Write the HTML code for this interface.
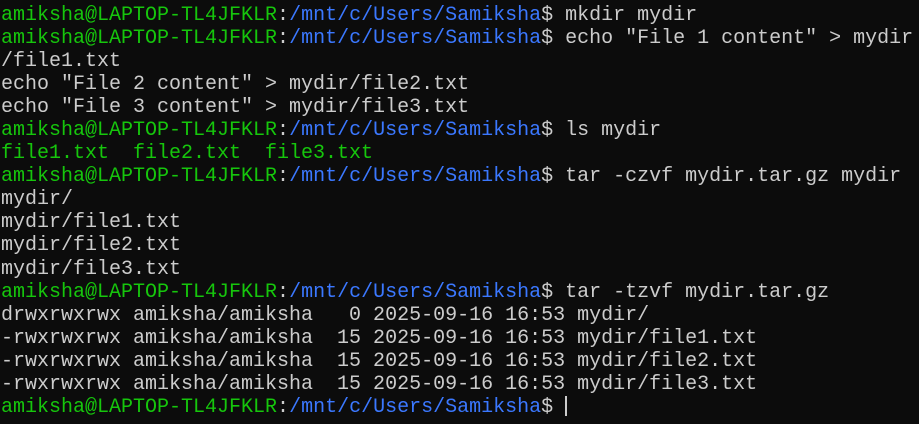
<html><head><style>
body{margin:0;background:#0c0c0c;width:919px;height:424px;overflow:hidden}
pre{margin:0;padding:4px 0 0 1px;font-family:"Liberation Mono",monospace;font-size:20px;line-height:23.05px;color:#cccccc}
.g{color:#16c60c}.b{color:#3b78ff}
.c{display:inline-block;width:2px;height:20px;background:#cccccc;vertical-align:-4px}
</style></head><body><pre><span class="g">amiksha@LAPTOP-TL4JFKLR</span>:<span class="b">/mnt/c/Users/Samiksha</span>$ mkdir mydir
<span class="g">amiksha@LAPTOP-TL4JFKLR</span>:<span class="b">/mnt/c/Users/Samiksha</span>$ echo "File 1 content" &gt; mydir
/file1.txt
echo "File 2 content" &gt; mydir/file2.txt
echo "File 3 content" &gt; mydir/file3.txt
<span class="g">amiksha@LAPTOP-TL4JFKLR</span>:<span class="b">/mnt/c/Users/Samiksha</span>$ ls mydir
<span class="g">file1.txt  file2.txt  file3.txt</span>
<span class="g">amiksha@LAPTOP-TL4JFKLR</span>:<span class="b">/mnt/c/Users/Samiksha</span>$ tar -czvf mydir.tar.gz mydir
mydir/
mydir/file1.txt
mydir/file2.txt
mydir/file3.txt
<span class="g">amiksha@LAPTOP-TL4JFKLR</span>:<span class="b">/mnt/c/Users/Samiksha</span>$ tar -tzvf mydir.tar.gz
drwxrwxrwx amiksha/amiksha   0 2025-09-16 16:53 mydir/
-rwxrwxrwx amiksha/amiksha  15 2025-09-16 16:53 mydir/file1.txt
-rwxrwxrwx amiksha/amiksha  15 2025-09-16 16:53 mydir/file2.txt
-rwxrwxrwx amiksha/amiksha  15 2025-09-16 16:53 mydir/file3.txt
<span class="g">amiksha@LAPTOP-TL4JFKLR</span>:<span class="b">/mnt/c/Users/Samiksha</span>$ <span class="c"></span></pre></body></html>
